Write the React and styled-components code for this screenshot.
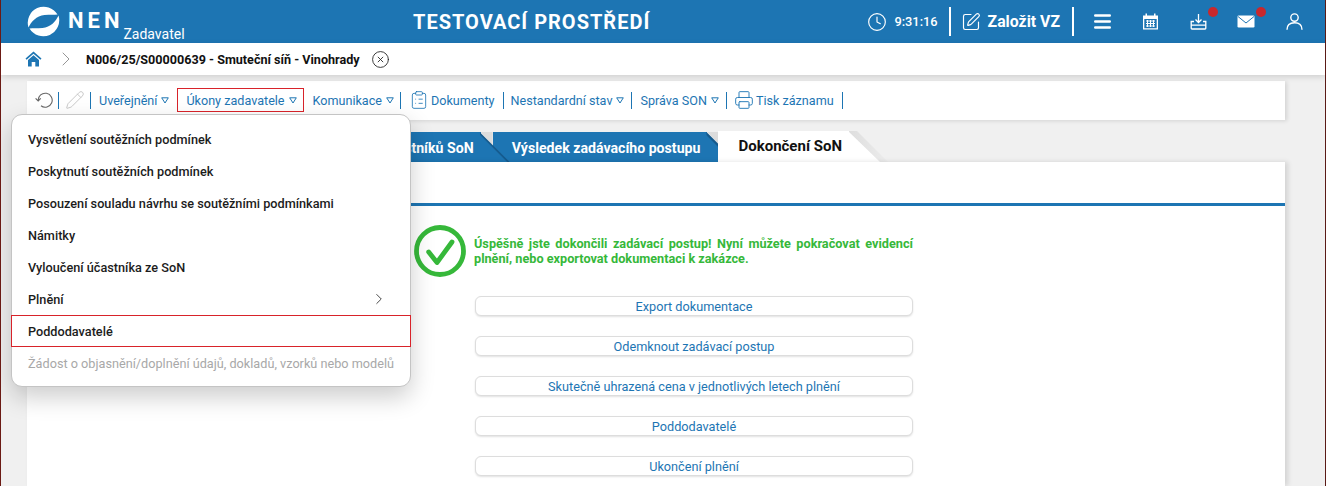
import React from 'react';
import styled, { createGlobalStyle } from 'styled-components';
import { Clock, SquarePen, ChevronRight, CircleX, Pencil, ClipboardList, Printer } from 'lucide-react';

const blue = '#1d75b3';

const GlobalStyle = createGlobalStyle`
  html, body { margin: 0; padding: 0; height: 100%; overflow: hidden; }
  body { font-family: Roboto, "Liberation Sans", sans-serif; background: #f0f0f0; }
`;

const Page = styled.div`
  position: relative;
  width: 1326px;
  height: 486px;
  box-sizing: border-box;
  border-left: 1px solid #6b1a14;
  border-right: 1px solid #5a1a16;
  background: #f0f0f0;
  overflow: hidden;
`;

const Header = styled.header`
  height: 43px;
  background: ${blue};
  color: #fff;
  display: grid;
  grid-template-columns: 412px auto 1fr;
  align-items: center;
`;

const Brand = styled.div`
  display: flex;
  align-items: flex-start;
  padding-left: 26px;
  height: 43px;
`;

const BrandName = styled.span`
  font-size: 22px;
  font-weight: 700;
  letter-spacing: 4px;
  margin: 8px 0 0 8px;
  line-height: 26px;
`;

const BrandRole = styled.span`
  font-size: 14px;
  margin: 26px 0 0 0;
  line-height: 16px;
`;

const Title = styled.h1`
  margin: 0;
  font-size: 20px;
  font-weight: 700;
  letter-spacing: 1px;
`;

const HeaderRight = styled.div`
  display: flex;
  align-items: center;
  justify-content: flex-end;
  padding-right: 7px;
`;

const ClockText = styled.span`
  font-size: 12.8px;
  font-weight: 500;
  margin: 0 11px 0 7px;
`;

const Divider = styled.span`
  width: 2px;
  height: 29px;
  background: #fff;
`;

const CreateText = styled.span`
  font-size: 15.8px;
  font-weight: 700;
  margin: 0 12px 0 7px;
`;

const IconGroup = styled.div`
  display: flex;
  margin-left: 4px;
`;

const IconSlot = styled.span`
  position: relative;
  display: flex;
  align-items: center;
  justify-content: center;
  width: 48px;
  height: 24px;
`;

const Dot = styled.span`
  position: absolute;
  top: -2.5px;
  right: 4px;
  width: 10px;
  height: 10px;
  border-radius: 50%;
  background: #c9282d;
`;

const Breadcrumb = styled.nav`
  position: relative;
  height: 32px;
  background: #fff;
  display: flex;
  align-items: center;
  padding-left: 24px;
  box-shadow: 0 2px 6px rgba(0, 0, 0, 0.14);
`;

const CrumbText = styled.span`
  font-size: 12.6px;
  font-weight: 700;
  color: #111;
  margin: 0 11px 0 8px;
`;

const Content = styled.main`
  padding: 6px 40px 0 26px;
`;

const Toolbar = styled.div`
  height: 39px;
  box-sizing: border-box;
  background: #fff;
  display: flex;
  align-items: center;
  padding: 0 0 1px 8px;
  box-shadow: 2px 1px 4px rgba(0, 0, 0, 0.12);
`;

const ToolIcon = styled.span`
  display: flex;
  align-items: center;
  margin: 0 ${p => p.$mr ?? 0}px 0 ${p => p.$ml ?? 0}px;
`;

const ToolItem = styled.span`
  display: flex;
  align-items: center;
  height: 24px;
  box-sizing: border-box;
  font-size: 12.6px;
  color: ${blue};
  padding: 0 ${p => p.$pr ?? 0}px 0 ${p => p.$pl ?? 0}px;
  border: 1px solid ${p => (p.$active ? '#d8232a' : 'transparent')};
  margin: 0 ${p => (p.$active ? '8px 0 7px' : '0')};
  white-space: nowrap;
`;

const ToolSep = styled.span`
  width: 1px;
  height: 17px;
  background: ${blue};
`;

const Caret = styled.svg`
  width: 8px;
  height: 7px;
  margin-left: 4px;
`;

const Tabs = styled.div`
  display: flex;
  align-items: flex-end;
  justify-content: flex-end;
  height: 42px;
  padding-right: 436px;
`;

const Tab = styled.div`
  position: relative;
  height: 30px;
  display: flex;
  align-items: center;
  box-sizing: border-box;
  padding: 1px 7px 0 19px;
  margin-left: 12px;
  font-size: 14.15px;
  font-weight: 700;
  white-space: nowrap;
  color: #fff;
  background: ${blue};
  &::before {
    content: '';
    position: absolute;
    top: 0;
    left: 100%;
    width: 12px;
    height: 13px;
    background: #dcdcdc;
    clip-path: polygon(0 0, 100% 0, 100% 100%);
  }
  &::after {
    content: '';
    position: absolute;
    z-index: 1;
    top: 0;
    left: calc(100% - 1px);
    width: 30px;
    height: 30px;
    background: linear-gradient(to top right, ${blue} 0 44%, #14598c 47% 50%);
    clip-path: polygon(0 0, 100% 100%, 0 100%);
  }
`;

const ActiveTab = styled.div`
  position: relative;
  z-index: 2;
  height: 31px;
  display: flex;
  align-items: center;
  box-sizing: border-box;
  padding: 0 7px 2px 20px;
  margin-left: 11px;
  font-size: 15px;
  font-weight: 700;
  white-space: nowrap;
  color: #111;
  background: #fff;
  &::before {
    content: '';
    position: absolute;
    top: 0;
    left: 100%;
    width: 39px;
    height: 31px;
    background: linear-gradient(to right, #dedede, #ececec);
    clip-path: polygon(0 0, 8px 0, 100% 100%, 0 100%);
  }
  &::after {
    content: '';
    position: absolute;
    top: 0;
    left: calc(100% - 1px);
    width: 32px;
    height: 31px;
    background: #fff;
    clip-path: polygon(0 0, 100% 100%, 0 100%);
  }
`;

const Panel = styled.section`
  position: relative;
  z-index: 3;
  height: 324px;
  background: #fff;
  box-shadow: 3px 0 5px rgba(0, 0, 0, 0.12);
  padding-top: 41px;
  box-sizing: border-box;
`;

const PanelRule = styled.div`
  height: 3px;
  background: ${blue};
`;

const PanelBody = styled.div`
  width: 499px;
  margin-left: 387px;
  padding-top: 19px;
  display: flex;
  flex-direction: column;
  align-items: flex-end;
`;

const Success = styled.div`
  display: flex;
  align-items: center;
  gap: 8px;
  width: 100%;
  margin-bottom: 19px;
`;

const SuccessText = styled.p`
  margin: 0;
  flex: 1;
  font-size: 12.7px;
  line-height: 15px;
  font-weight: 700;
  color: #36b83a;
  text-align: justify;
`;

const ActionButton = styled.button`
  display: block;
  width: 438px;
  height: 20px;
  margin-bottom: 20px;
  padding: 0;
  background: #fff;
  border: 1px solid #ddd;
  border-radius: 6px;
  box-shadow: 0 1px 2px rgba(0, 0, 0, 0.12);
  color: ${blue};
  font-family: inherit;
  font-size: 12.7px;
`;

const DropMenu = styled.div`
  position: absolute;
  z-index: 4;
  top: 114px;
  left: 10px;
  width: 400px;
  height: 273px;
  box-sizing: border-box;
  padding-top: 8px;
  background: #fff;
  border: 1px solid #c4c4c4;
  border-radius: 11px;
  box-shadow: 0 10px 25px rgba(0, 0, 0, 0.2);
`;

const DropItem = styled.div`
  height: 32px;
  box-sizing: border-box;
  margin: 0 -1px;
  padding: 0 22px 0 16px;
  display: flex;
  align-items: center;
  justify-content: space-between;
  font-size: 12.7px;
  font-weight: ${p => (p.$disabled ? 400 : 500)};
  color: ${p => (p.$disabled ? '#a8a8a8' : '#1c1c1c')};
  border: 1px solid ${p => (p.$active ? '#d8232a' : 'transparent')};
  white-space: nowrap;
`;

const swoosh = 'M30.5 9.5A16 16 0 0 0 1.5 22.5C4 17 9.5 10.5 17.5 10C23 9.7 27 10 30.5 9.5z';

const Logo = () => (
  <svg width="33" height="33" viewBox="0 0 33 33" style={{ marginTop: 5 }}>
    <path fill="#fff" d={swoosh} />
    <path fill="#fff" transform="rotate(180 16.5 16.5)" d={swoosh} />
  </svg>
);

const Home = () => (
  <svg width="17" height="16" viewBox="0 0 17 16">
    <path fill={blue} d="M8.5 0.5L0.5 7.5L1.6 8.7L8.5 2.8L15.4 8.7L16.5 7.5z" />
    <path fill={blue} d="M3 9L8.5 4.3L14 9V15.5H10.3V11H6.7V15.5H3z" />
  </svg>
);

const Burger = () => (
  <svg width="17" height="15" viewBox="0 0 17 15" fill="none" stroke="#fff" strokeWidth="2.4" strokeLinecap="round">
    <path d="M1.2 1.5H15.8M1.2 7.5H15.8M1.2 13.5H15.8" />
  </svg>
);

const Calendar = () => (
  <svg width="17" height="17" viewBox="0 0 17 17" fill="none" stroke="#fff">
    <path fill="#fff" stroke="none" d="M1 2.5H3.5V0.5H5V2.5H12V0.5H13.5V2.5H16V16.5H1zM2.3 6V15.2H14.7V6z" />
    <path strokeWidth="1" d="M4 8H13M4 10.5H13M4 13H13M5.5 7V14M8.5 7V14M11.5 7V14" />
  </svg>
);

const Inbox = () => (
  <svg width="17" height="17" viewBox="0 0 17 17" fill="none" stroke="#fff" strokeWidth="1.3">
    <path d="M8.5 1V9M5.5 6.5L8.5 9.5L11.5 6.5" />
    <path d="M4 8.5H1.2V15.2Q1.2 16 2 16H15Q15.8 16 15.8 15.2V8.5H13M1.2 12.2H15.8" />
  </svg>
);

const Envelope = () => (
  <svg width="18" height="13" viewBox="0 0 18 13" fill="none">
    <rect x="0.5" y="0.5" width="17" height="12" rx="1.2" fill="#fff" />
    <path d="M1 1.5L9 8L17 1.5" stroke={blue} strokeWidth="1" />
  </svg>
);

const Person = () => (
  <svg width="17" height="17" viewBox="0 0 17 17" fill="none" stroke="#fff" strokeWidth="1.4">
    <circle cx="8.5" cy="4.6" r="3.7" />
    <path d="M1 16.8C1 11.5 4.5 9.8 8.5 9.8C12.5 9.8 16 11.5 16 16.8" />
  </svg>
);

const Refresh = () => (
  <svg width="18" height="16" viewBox="0 0 18 16" fill="none" stroke="#666" strokeWidth="1.1">
    <path d="M3.2 8.5A7 7 0 1 1 6 13.8" />
    <path d="M0.6 6.3L3.2 9L5.8 6.3" />
  </svg>
);

const Check = () => (
  <svg width="52" height="52" viewBox="0 0 52 52" fill="none" stroke="#36b83a">
    <circle cx="26" cy="26" r="23.5" strokeWidth="4.8" />
    <path d="M14.7 27L23 37.5L38 17" strokeWidth="4.8" strokeLinecap="round" strokeLinejoin="round" />
  </svg>
);

const Down = () => (
  <Caret viewBox="0 0 8 7" fill="none" stroke={blue}>
    <path d="M0.7 0.8H7.3L4 6z" />
  </Caret>
);

const menuItems = [
  'Vysvětlení soutěžních podmínek',
  'Poskytnutí soutěžních podmínek',
  'Posouzení souladu návrhu se soutěžními podmínkami',
  'Námitky',
  'Vyloučení účastníka ze SoN',
];

const actions = [
  'Export dokumentace',
  'Odemknout zadávací postup',
  'Skutečně uhrazená cena v jednotlivých letech plnění',
  'Poddodavatelé',
  'Ukončení plnění',
];

const App = () => (
  <Page>
    <GlobalStyle />
    <Header>
      <Brand>
        <Logo />
        <BrandName>NEN</BrandName>
        <BrandRole>Zadavatel</BrandRole>
      </Brand>
      <Title>TESTOVACÍ PROSTŘEDÍ</Title>
      <HeaderRight>
        <Clock size={20} strokeWidth={1.4} />
        <ClockText>9:31:16</ClockText>
        <Divider />
        <SquarePen size={20} strokeWidth={1.4} style={{ marginLeft: 10 }} />
        <CreateText>Založit VZ</CreateText>
        <Divider />
        <IconGroup>
          <IconSlot><Burger /></IconSlot>
          <IconSlot><Calendar /></IconSlot>
          <IconSlot><Inbox /><Dot /></IconSlot>
          <IconSlot><Envelope /><Dot /></IconSlot>
          <IconSlot><Person /></IconSlot>
        </IconGroup>
      </HeaderRight>
    </Header>
    <Breadcrumb>
      <Home />
      <ChevronRight size={24} color="#8a8a8a" strokeWidth={0.9} style={{ marginLeft: 12 }} />
      <CrumbText>N006/25/S00000639 - Smuteční síň - Vinohrady</CrumbText>
      <CircleX size={19} color="#222" strokeWidth={1.1} />
    </Breadcrumb>
    <Content>
      <Toolbar>
        <ToolIcon $mr={5}><Refresh /></ToolIcon>
        <ToolSep />
        <ToolIcon $ml={6} $mr={5}><Pencil size={20} color="#c4c4c4" strokeWidth={1.1} /></ToolIcon>
        <ToolSep />
        <ToolItem $pl={7}>Uveřejnění<Down /></ToolItem>
        <ToolItem $active $pl={8} $pr={6}>Úkony zadavatele<Down /></ToolItem>
        <ToolItem $pr={5}>Komunikace<Down /></ToolItem>
        <ToolSep />
        <ToolIcon $ml={8}><ClipboardList size={20} color={blue} strokeWidth={1} /></ToolIcon>
        <ToolItem $pl={1} $pr={7}>Dokumenty</ToolItem>
        <ToolSep />
        <ToolItem $pl={6} $pr={6}>Nestandardní stav<Down /></ToolItem>
        <ToolSep />
        <ToolItem $pl={7} $pr={6}>Správa SON<Down /></ToolItem>
        <ToolSep />
        <ToolIcon $ml={7}><Printer size={20} color={blue} strokeWidth={1.1} /></ToolIcon>
        <ToolItem $pl={1} $pr={7}>Tisk záznamu</ToolItem>
        <ToolSep />
      </Toolbar>
      <Tabs>
        <Tab>Hodnocení účastníků SoN</Tab>
        <Tab>Výsledek zadávacího postupu</Tab>
        <ActiveTab>Dokončení SoN</ActiveTab>
      </Tabs>
      <Panel>
        <PanelRule />
        <PanelBody>
          <Success>
            <Check />
            <SuccessText>Úspěšně jste dokončili zadávací postup! Nyní můžete pokračovat evidencí plnění, nebo exportovat dokumentaci k zakázce.</SuccessText>
          </Success>
          {actions.map(a => <ActionButton key={a}>{a}</ActionButton>)}
        </PanelBody>
      </Panel>
    </Content>
    <DropMenu>
      {menuItems.map(m => <DropItem key={m}>{m}</DropItem>)}
      <DropItem>Plnění<ChevronRight size={18} color="#444" strokeWidth={1.3} /></DropItem>
      <DropItem $active>Poddodavatelé</DropItem>
      <DropItem $disabled>Žádost o objasnění/doplnění údajů, dokladů, vzorků nebo modelů</DropItem>
    </DropMenu>
  </Page>
);

export default App;
